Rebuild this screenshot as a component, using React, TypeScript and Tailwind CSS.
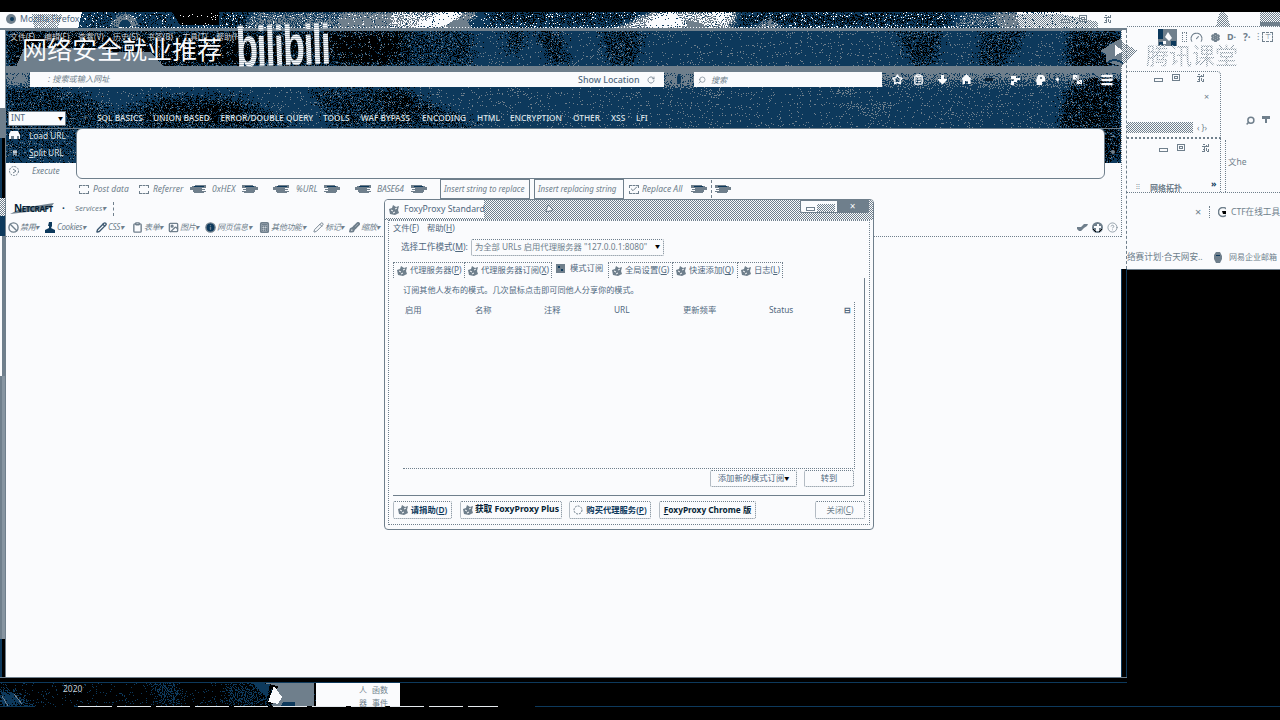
import React from "react";
import {
  Star, ClipboardList, ArrowDown, House, Menu, Search, RotateCw, Ban, User, Pencil, Clipboard,
  Image as ImageIcon, Info, Calculator, Ruler, Brush, Play, Check, Gauge, Settings, CircleHelp,
} from "lucide-react";

type P = { className?: string; children?: React.ReactNode };

const T = ({ className = "", children }: P) => (
  <span className={"block shrink-0 whitespace-nowrap " + className}>{children}</span>
);

const Grain = ({ id, color, blur }: { id: string; color: string; blur: number }) => (
  <filter id={id} x="0" y="0" width="1" height="1" colorInterpolationFilters="sRGB">
    <feGaussianBlur in="SourceAlpha" stdDeviation={blur} result="soft" />
    <feTurbulence type="fractalNoise" baseFrequency="0.9" numOctaves={2} seed={7} result="noise" />
    <feComposite in="soft" in2="noise" operator="arithmetic" k1={0} k2={1} k3={2.5} k4={-1.25} />
    <feComponentTransfer result="cut"><feFuncA type="discrete" tableValues="0 1" /></feComponentTransfer>
    <feFlood floodColor={color} />
    <feComposite in2="cut" operator="in" />
  </filter>
);

const Patterns = () => (
  <svg className="absolute h-0 w-0" aria-hidden="true">
    <defs>
      <Grain id="grainK" color="#000" blur={5} />
      <Grain id="grainG" color="#6f7f8c" blur={2} />
      <Grain id="grainW" color="#fafbfd" blur={1.5} />
      <Grain id="grainB" color="#0d395c" blur={3} />
      <pattern id="g50" width="2" height="2" patternUnits="userSpaceOnUse">
        <path d="M0 0h1v1h-1zM1 1h1v1h-1z" fill="#6f7f8c" />
      </pattern>
      <pattern id="g12" width="6" height="6" patternUnits="userSpaceOnUse">
        <path d="M0 0h1v1h-1zM3 4h1v1h-1z" fill="#6f7f8c" />
      </pattern>
      <pattern id="w50" width="2" height="2" patternUnits="userSpaceOnUse">
        <path d="M0 0h1v1h-1zM1 1h1v1h-1z" fill="#fafbfd" />
      </pattern>
    </defs>
  </svg>
);

const TitleArt = () => (
  <svg className="absolute inset-0" width="1127" height="18" shapeRendering="crispEdges">
    <rect width="1127" height="18" fill="#0d395c" />
    <g filter="url(#grainK)">
      <path d="M0 0H1127V18H0z" fillOpacity="0" />
      <path d="M82 0H172V16H82z" fillOpacity=".3" />
      <path d="M219 0H250V16H219zM485 0H640V12H490zM740 0H952V14H740z" fillOpacity=".55" />
    </g>
    <path d="M172 0H219V13H180z" fill="#000" />
    <g filter="url(#grainG)">
      <path d="M0 0H1127V18H0z" fillOpacity="0" />
      <path d="M250 0H345L340 16H245zM950 16L965 1H1000V14z" fillOpacity=".55" />
      <path d="M112 16q0-14 13-14t13 14zM345 0H480L460 18H335zM612 18L650 0H740L730 18zM750 16l20-9 12 9zM996 0H1127V18H1000z" />
    </g>
    <path d="M119 15q0-7 6-7t6 7z" fill="#0d395c" />
    <path d="M0 0H82L78 16H0z" fill="#fafbfd" />
    <path d="M32 2H62L58 16H34z" fill="url(#g50)" />
    <g filter="url(#grainW)">
      <path d="M0 0H1127V18H0z" fillOpacity="0" />
      <path d="M392 0H462L440 16H390zM622 16L655 0H735L728 16z" fillOpacity=".5" />
      <path d="M413 15L437 2L445 0H464L445 15zM645 16L658 1H677L684 15zM708 0H731L722 10zM1016 0H1127V18H1020z" />
    </g>
    <path d="M446 14L458 8H466L472 16H450zM686 8l16 3 4 5h-18z" fill="#6f7f8c" />
    <path d="M1062 0H1127V16H1098z" fill="#fafbfd" />
    <path d="M1016 2H1062L1098 10V16H1018z" fill="url(#g50)" />
    <path d="M0 16H1127V18H0z" fill="#6f7f8c" />
    <path d="M120 15.500H1120" stroke="#fafbfd" strokeDasharray="1 2" />
  </svg>
);

const HeaderArt = () => (
  <svg className="absolute inset-0" width="1115" height="133" shapeRendering="crispEdges">
    <rect width="1115" height="133" fill="#0d395c" />
    <g filter="url(#grainK)">
      <path d="M0 0H1115V133H0z" fillOpacity="0" />
      <path d="M0 0H400V37H0z" fillOpacity=".7" />
      <path d="M400 0H468V37H400z" fillOpacity=".45" />
      <path d="M0 0H100V14H0zM155 12H245L225 37H160zM320 0H400L380 37H340z" fillOpacity=".7" />
      <path d="M0 56L45 56 90 70 130 98 0 98zM80 98L150 66H230L300 98zM300 58H400L475 98H330z" fillOpacity=".5" />
      <path d="M370 60H410L400 98H390zM150 72H230L250 98H130z" fillOpacity=".4" />
      <path d="M0 98H72V132H0z" fillOpacity=".3" />
      <path d="M498 0h22l-2 22h-16zM528 0h28l8 37h-20zM592 0h46l-8 37h-26zM888 0h50l-10 37h-20zM975 0h46l-20 37h-30z" fillOpacity=".5" />
      <path d="M1062 0H1115V133H1090L1052 96L1060 60z" fillOpacity=".65" />
    </g>
    <path d="M10 37L18 18H95L108 22H145L158 37z" fill="#6f7f8c" />
    <path d="M0 36H1115V43H0z" fill="#6f7f8c" />
    <g filter="url(#grainG)">
      <path d="M0 0H1115V133H0z" fillOpacity="0" />
      <path d="M0 40H24V56H0zM658 40H690V58H658zM876 40H1115V49H876z" fillOpacity=".8" />
      <path d="M876 48H1080V58H876z" fillOpacity=".35" />
      <path d="M500 57h20l-10 12zM690 57h26v17zM810 57h40l-5 12zM832 74h60l-20 12z" fillOpacity=".3" />
    </g>
    <path d="M834 74l36 6 18-8M862 98l16-20 22-8M1014 94l20-12M522 92l40-6" stroke="#6f7f8c" strokeDasharray="1 3" fill="none" />
    <path d="M0 98.500H1115M0 .5H1115" stroke="#6f7f8c" />
  </svg>
);

const ic = "h-[11px] w-[11px] shrink-0";

const BoxMark = ({ on }: { on?: boolean }) => (
  <span className="flex h-[9px] w-[10px] shrink-0 items-center justify-center border border-dashed border-[#6f7f8c]">
    {on && <Check className="h-2 w-2" strokeWidth={3} />}
  </span>
);

const Arrow = ({ flip }: { flip?: boolean }) => (
  <svg width="16" height="10" viewBox="0 0 16 10" className={flip ? "shrink-0 -scale-x-100" : "shrink-0"} shapeRendering="crispEdges">
    <path d="M0 1H11V2H14V3H16V6H13V8H12V9H2V8H0V7H4V6H1V5H4V4H0z" fill="#6f7f8c" />
    <path d="M2 2H12V3H3z" fill="#0d395c" />
  </svg>
);

const Caption = ({ className = "" }: P) => (
  <svg width="56" height="10" className={"shrink-0 " + className} fill="none" stroke="#6f7f8c" shapeRendering="crispEdges">
    <path d="M1.500 5.500h8v3h-8zM19.500 1.500h7v6h-7zM21.500 3.500h3v2h-3z" />
    <path d="M44.500 1.500h2v2h2v-2h2v2h-2v3h2v2h-2v-2h-2v2h-2v-2h2v-3h-2z" strokeDasharray="2 1" />
  </svg>
);

const Tool = ({ className, icon, children }: P & { icon: React.ReactNode }) => (
  <div className={"flex shrink-0 items-center gap-[1px] " + className}>
    {icon}
    <T className="text-[8px] italic tracking-[-0.300px]">{children}▾</T>
  </div>
);

const Browser = () => (
  <section className="absolute left-0 top-[12px] flex h-[671px] w-[1127px] flex-col">
    <div className="relative h-[18px] shrink-0 overflow-hidden">
      <TitleArt />
      <div className="relative flex h-[13px] items-center pl-[6px]">
        <svg width="10" height="10"><circle cx="5" cy="5" r="5" fill="#6f7f8c" /><circle cx="6" cy="5" r="2" fill="#0d395c" /></svg>
        <T className="ml-[4px] w-[1040px] text-[8.800px] leading-[12px] text-[#50687d]">Mozilla Firefox</T>
        <Caption />
      </div>
    </div>
    <div className="flex min-h-0 grow">
      <div className="flex w-[6px] shrink-0 flex-col border-r border-[#6f7f8c]">
        <div className="h-[78px] bg-[#fafbfd]" />
        <div className="h-[30px] bg-[#6f7f8c]" />
        <div className="h-[60px] border-l-2 border-[#0d395c] bg-black" />
        <div className="h-[18px] bg-[repeating-conic-gradient(#6f7f8c_0_25%,#fafbfd_0_50%)] bg-[length:2px_2px]" />
        <div className="h-[20px] bg-[#0d395c]" />
        <div className="h-[140px] border-l-2 border-[#fafbfd] bg-[#6f7f8c]" />
        <div className="h-[263px] border-l-2 border-[#6f7f8c] bg-[#8795a1]" />
        <div className="grow border-l-2 border-[#0d395c] bg-black" />
      </div>
      <main className="flex w-[1115px] shrink-0 flex-col bg-[#fafbfd]">
        <div className="relative h-[133px] shrink-0">
          <HeaderArt />
          <div className="relative flex h-[133px] flex-col text-[#fafbfd]">
            <div className="flex h-[14px] shrink-0 pl-[4px] text-[8px] leading-[13px] text-[#c5ced6]">
              <T className="w-[34px]">文件(F)</T><T className="w-[34px]">编辑(E)</T><T className="w-[35px]">查看(V)</T>
              <T className="w-[34px]">历史(S)</T><T className="w-[35px]">书签(B)</T><T className="w-[34px]">工具(T)</T><T>帮助(H)</T>
            </div>
            <div className="h-[28px] shrink-0" />
            <div className="flex h-[15px] shrink-0 items-center pl-[14px]">
              <span className="h-[7px] w-[10px] -translate-x-[5px] rounded-full bg-[#6f7f8c]" />
              <div className="flex h-[15px] w-[634px] items-center bg-[#fafbfd] text-[#6f7f8c]">
                <T className="w-[542px] pl-[18px] text-[8.200px] italic">: 搜索或输入网址</T>
                <T className="w-[70px] pl-[6px] text-[8.900px] font-medium text-[#50687d]">Show Location</T>
                <RotateCw className="ml-[5px] h-2 w-2" strokeDasharray="3 1" />
              </div>
              <div className="flex w-[30px] justify-center"><span className="h-[9px] w-[4px] rounded-full bg-[#0d395c]" /></div>
              <div className="flex h-[15px] w-[188px] items-center gap-[5px] bg-[#fafbfd] pl-[4px] text-[8px] italic text-[#6f7f8c]">
                <Search className="h-2 w-2 -scale-x-100" />搜索
              </div>
              <div className="ml-[10px] flex items-center">
                <Star className={ic + " mr-[10px]"} strokeWidth={3} />
                <ClipboardList className={ic + " mr-[13px]"} strokeWidth={3} />
                <svg width="11" height="11" className="mr-[13px]" fill="#fafbfd"><path d="M4 1h3v4h3v1L5.500 10.500 1 6V5h3z" /></svg>
                <svg width="11" height="11" className="mr-[13px]" fill="#fafbfd"><path d="M5.500 0L11 5.500H9.500V10H7V7H4v3H1.500V5.500H0z" /></svg>
                <span className="mr-[17px] h-[3px] w-[8px] bg-[#0a2033]" />
                <svg width="11" height="11" className="mr-[14px]" fill="#fafbfd"><path d="M1 2h5v2h4v2H7v2H4v3H1V7h3V5H1z" /></svg>
                <svg width="11" height="11" className="mr-[10px]"><path d="M3 1h5l2 2v4L7 8v3H2L1 6z" fill="#fafbfd" /><path d="M5 3h2v2H5z" fill="#6f7f8c" /></svg>
                <span className="mr-[14px] h-[3px] w-[3px] rotate-45 bg-[#fafbfd]" />
                <svg width="10" height="10" className="mr-[17px]"><path d="M0 0h6v5H0zM4 5h5v4H4z" fill="#fafbfd" /><path d="M2 2l6 6M5 0v5H0" stroke="#6f7f8c" fill="none" /></svg>
                <Menu className="h-[14px] w-[14px]" strokeWidth={4} />
              </div>
            </div>
            <div className="flex h-[41px] shrink-0 items-end pl-[2px]">
              <div className="mb-[2px] flex h-[15px] w-[58px] items-center justify-between border border-[#6f7f8c] bg-[#fafbfd] px-[2px] text-[8.500px] text-[#50687d]">INT<span className="text-[5px] text-black">▼</span></div>
              <div className="mb-[3px] ml-[5px] flex h-[14px] items-center text-[8.300px] font-medium leading-[14px] text-[#dfe5e9]">
                <T className="w-[12px] text-[#6f7f8c]">−</T><T className="w-[14px] text-[#6f7f8c]">+</T>
                <T className="w-[56px]">SQL BASICS</T><T className="w-[67.500px]">UNION BASED</T><T className="w-[102.500px]">ERROR/DOUBLE QUERY</T>
                <T className="w-[38px]">TOOLS</T><T className="w-[61px]">WAF BYPASS</T><T className="w-[55px]">ENCODING</T><T className="w-[33px]">HTML</T>
                <T className="w-[63px]">ENCRYPTION</T><T className="w-[38px]">OTHER</T><T className="w-[25px]">XSS</T><T>LFI</T>
              </div>
            </div>
            <div className="flex h-[35px] shrink-0 items-start">
              <div className="-mt-[2px] w-[70px] text-[8.300px] leading-[17px] text-[#dfe5e9]">
                <div className="flex h-[18px] items-center pl-[3px]"><svg width="11" height="9"><path d="M2 0h7l2 4v4H0V3z" fill="#fafbfd" /><path d="M2 5h3v3H2zM8 5h2v3H8z" fill="#6f7f8c" /></svg><T className="ml-[9px]">Load URL</T></div>
                <div className="flex h-[17px] items-center pl-[3px]"><svg width="11" height="10"><path d="M1 0v7" stroke="#6f7f8c" strokeDasharray="1 1" /><path d="M5 2v5M7 2v5M4 4h4" stroke="#fafbfd" /></svg><T className="ml-[9px]"><u>S</u>plit URL</T></div>
                <div className="flex h-[18px] items-center pl-[3px] pt-[1px] text-[#6f7f8c]"><svg width="10" height="10" fill="none" stroke="#6f7f8c"><circle cx="5" cy="5" r="4.500" strokeDasharray="2 1" /><path d="M4 3l3 2-3 2" /></svg><T className="ml-[13px] italic">Execute</T></div>
              </div>
              <div className="h-[51px] w-[1029px] shrink-0 rounded-[6px] border border-[#6f7f8c] bg-[#fafbfd]" />
              <div className="flex w-[16px] flex-col items-center gap-[13px] pt-[8px]"><span className="h-px w-[4px] bg-[#6f7f8c]" /><span className="h-[4px] w-[4px] rounded-full bg-[#6f7f8c]" /></div>
            </div>
          </div>
        </div>
        <div className="flex h-[36px] shrink-0 items-end text-[8.500px] italic leading-[12px] text-[#6f7f8c]">
          <div className="flex h-[20px] items-center pl-[73px]">
            <BoxMark /><T className="ml-[4px] w-[46px]">Post data</T>
            <BoxMark /><T className="ml-[4px] w-[37px]">Referrer</T>
            <Arrow flip /><T className="ml-[6px] w-[30px]">0xHEX</T><Arrow /><span className="w-[15px]" />
            <Arrow flip /><T className="ml-[7px] w-[28px]">%URL</T><Arrow /><span className="w-[15px]" />
            <Arrow flip /><T className="ml-[6px] w-[34px] tracking-[-0.200px]">BASE64</T><Arrow />
            <div className="ml-[13px] h-[20px] w-[90px] overflow-hidden border border-[#6f7f8c] px-[3px] pt-[3px] text-[8px]"><T>Insert string to replace</T></div>
            <div className="ml-[4px] mr-[5px] h-[20px] w-[90px] overflow-hidden border border-[#6f7f8c] px-[3px] pt-[3px] text-[8px]"><T>Insert replacing string</T></div>
            <BoxMark on /><T className="ml-[3px] w-[49px]">Replace All</T><Arrow /><span className="ml-[4px] mr-[3px] h-[18px] border-l border-dashed border-[#6f7f8c]" /><Arrow />
          </div>
        </div>
        <div className="flex h-[19px] shrink-0 items-center pl-[4px]">
          <div className="relative flex h-[12px] w-[50px] items-center">
            <svg className="absolute inset-0" width="50" height="12"><path d="M0 11L12 5l32-5-3 4-6 3z" fill="#6f7f8c" /></svg>
            <T className="relative pl-[4px] text-[8px] font-bold leading-[9px] tracking-[-0.400px] text-[#061f35]"><span className="text-[10px]">N</span>ETCRAFT</T>
          </div>
          <T className="ml-[2px] w-[13px] text-[10px] font-bold text-[#0d395c]">·</T>
          <T className="w-[38px] text-[7.800px] italic text-[#6f7f8c]">Services▾</T>
          <span className="h-[14px] border-l border-dashed border-[#6f7f8c]" />
        </div>
        <div className="flex h-[19px] shrink-0 items-center border-b border-dotted border-[#6f7f8c] pl-[2px] text-[#6f7f8c]">
          <Tool className="w-[37px]" icon={<Ban className={ic} strokeWidth={3} />}>禁用</Tool>
          <Tool className="w-[51px]" icon={<svg className={ic} viewBox="0 0 11 11" fill="#0d395c"><path d="M4 0h3v4l-1 2 4 2v3H0V8l4-2V4H3z" /></svg>}>Cookies</Tool>
          <Tool className="w-[36px]" icon={<Pencil className={ic} strokeWidth={3} color="#3f5a72" />}>CSS</Tool>
          <Tool className="w-[36px]" icon={<Clipboard className={ic} strokeWidth={3} />}>表单</Tool>
          <Tool className="w-[37px]" icon={<ImageIcon className={ic} strokeWidth={3} />}>图片</Tool>
          <Tool className="w-[54px]" icon={<Info className={ic} strokeWidth={3} fill="#0d395c" />}>网页信息</Tool>
          <Tool className="w-[54px]" icon={<Calculator className={ic} strokeWidth={4} />}>其他功能</Tool>
          <Tool className="w-[36px]" icon={<Pencil className={ic} strokeWidth={2} />}>标记</Tool>
          <Tool className="w-[36px]" icon={<Brush className={ic} strokeWidth={4} />}>缩放</Tool>
          <div className="ml-auto flex items-center gap-[4px] pr-[3px]">
            <svg width="11" height="11" fill="#6f7f8c"><path d="M0 5h4l3-3h4l-1 2-3 2-3 3H2L0 7z" /></svg><svg width="11" height="11"><circle cx="5.500" cy="5.500" r="5.500" fill="#6f7f8c" /><path d="M5 2h2v2h2v2H7v3H4V6H2V4h3z" fill="#fafbfd" /><path d="M1 7l3 3M10 7l-3 3" stroke="#000" /></svg><CircleHelp className={ic} strokeWidth={1.500} />
          </div>
        </div>
      </main>
      <div className="flex w-[6px] shrink-0 flex-col">
        <div className="h-[239px] shrink-0 border-r border-dashed border-[#6f7f8c] bg-[#fafbfd]"><div className="h-[207px] border-l border-dotted border-[#6f7f8c]" /></div>
        <div className="grow border-x border-[#0d395c] bg-black" />
      </div>
    </div>
    <div className="h-[6px] shrink-0 border-b border-t border-b-[#0d395c] border-t-[#6f7f8c] bg-black" />
  </section>
);

const SideWindows = () => (
  <section className="absolute left-[1127px] top-[12px] flex h-[258px] w-[153px] flex-col overflow-hidden border-b border-[#6f7f8c] bg-[#fafbfd] text-[9px] text-[#6f7f8c]">
    <div className="flex h-[15px] shrink-0 items-end justify-end border-b border-dotted border-[#6f7f8c]">
      <svg width="16" height="14" className="mr-[29px]" shapeRendering="crispEdges"><path d="M4 2q4-4 8 0l3 12H1z" fill="url(#g50)" /></svg>
      <svg width="20" height="15" shapeRendering="crispEdges"><path d="M0 0h20v11H0z" fill="url(#g50)" /><path d="M0 11h20v4H0z" fill="#6f7f8c" /></svg>
    </div>
    <div className="flex h-[20px] shrink-0 items-center pl-[31px]">
      <svg width="20" height="19" className="mr-[4px]"><path d="M0 1h19v17H0z" fill="#6f7f8c" /><path d="M0 1h5v10H0zM13 13h5v5h-5zM1 14h4v3H1z" fill="#0d395c" /><path d="M7 9l3-5 4 6-3 3zM5 13h3v3H5z" fill="#fafbfd" /></svg>
      <span className="mr-[3px] h-[10px] w-[5px] border border-dotted border-[#6f7f8c]" />
      <Gauge className="mr-[8px] h-[13px] w-[13px]" strokeWidth={2} strokeDasharray="2 1" />
      <Settings className="mr-[7px] h-[9px] w-[9px]" strokeWidth={5} />
      <T className="w-[16px] font-bold">D·</T><T className="w-[14px] text-[10px] font-bold">?·</T><T className="w-[5px]">⁝</T>
      <span className="h-[10px] w-[11px] border border-dashed border-[#6f7f8c] text-center text-[7px] leading-[8px]">⊤</span>
    </div>
    <div className="h-[24px] shrink-0" />
    <div className="flex h-[122px] shrink-0 border-b border-dotted border-[#6f7f8c]">
      <div className="w-[94px] shrink-0">
        <div className="flex h-[68px] flex-col rounded-tr-[4px] border-b-2 border-r border-t border-dotted border-[#6f7f8c]">
          <Caption className="ml-[26px] mt-[1px]" />
          <T className="ml-[77px] mt-[8px] text-[9px] leading-[12px]">×</T>
          <div className="mt-auto flex h-[15px] items-start"><span className="h-[11px] w-[66px] bg-[repeating-conic-gradient(#6f7f8c_0_25%,#fafbfd_0_50%)] bg-[length:2px_2px]" /><T className="ml-[4px] text-[8px] leading-[11px]">{"‹ }›"}</T></div>
        </div>
        <div className="flex h-[53px] flex-col border-r border-dotted border-[#6f7f8c]">
          <Caption className="ml-[31px] mt-[4px]" />
          <div className="mt-auto flex items-end"><T className="w-[14px] pl-[9px] text-[7px]">⁝⁝</T><T className="ml-[9px] w-[61px] text-[8px] font-bold leading-[8px]">网络拓扑</T><T className="pb-[3px] text-[9px] font-bold leading-[10px] text-[#0d395c]">»</T></div>
        </div>
      </div>
      <div className="flex w-[5px] shrink-0 items-end"><span className="h-[52px] w-full border-r border-dotted border-[#6f7f8c]" /></div>
      <div className="flex flex-col">
        <div className="mt-[45px] flex h-[12px] gap-[7px] pl-[20px]"><Search className="h-[9px] w-[9px] -scale-x-100" strokeWidth={4} /><svg width="9" height="8"><path d="M0 0h8v3H5v4H3V3H0z" fill="#6f7f8c" /></svg></div>
        <T className="mt-[28px] pl-[2px] text-[8.500px]">文he</T>
      </div>
    </div>
    <div className="flex h-[38px] shrink-0 items-center pl-[68px]">
      <T className="w-[14px] text-[11px]">×</T><span className="mr-[8px] h-[12px] border-l border-dotted border-[#6f7f8c]" />
      <svg width="11" height="11" className="mr-[5px]"><circle cx="5" cy="5" r="4.500" fill="none" stroke="#6f7f8c" strokeWidth="1.500" /><path d="M4 4h4v3H5z" fill="#000" /></svg>
      <T className="text-[8.600px]">CTF在线工具</T>
    </div>
    <div className="flex h-[51px] items-end pb-[6px]">
      <T className="w-[86px] text-[8.600px] leading-[12px]">络赛计划·合天网安..</T>
      <svg width="10" height="11" className="mr-[6px]"><path d="M3 0h4l2 4v3l-2 4H3L1 7V3z" fill="#6f7f8c" /><path d="M3 3h4v1H3z" fill="#0d395c" /></svg>
      <T className="text-[8px] leading-[12px]">网易企业邮箱</T>
    </div>
  </section>
);

const Btn = ({ className = "", children }: P) => (
  <button className={"flex shrink-0 items-center justify-center rounded-[2px] border border-dotted border-[#6f7f8c] whitespace-nowrap " + className}>{children}</button>
);

const Fox = ({ className = "" }: P) => (
  <svg width="10" height="10" className={"shrink-0 " + className}><path d="M0 4l3-1 1-3 3 2 3-1-1 4 1 3-4 2-5-1z" fill="#6f7f8c" /><path d="M2 5l2 1M6 4l2-1M4 8l2-1" stroke="#fafbfd" /></svg>
);

const Tab = ({ className = "", children }: P) => (
  <div className={"flex h-[16px] shrink-0 items-center gap-[3px] border-r border-t border-dotted border-[#6f7f8c] " + className}><Fox /><T>{children}</T></div>
);

const Dialog = () => (
  <section className="absolute left-[384px] top-[199px] flex h-[331px] w-[490px] flex-col overflow-hidden rounded-[4px] border border-[#6f7f8c] bg-[#fafbfd] text-[8.300px] text-[#50687d]">
    <div className="flex h-[20px] shrink-0 items-start bg-[repeating-conic-gradient(#6f7f8c_0_25%,#fafbfd_0_50%)] bg-[length:2px_2px]">
      <div className="flex h-[18px] w-[99px] items-center bg-[#fafbfd] pl-[4px] pt-[2px]"><Fox /><T className="ml-[5px] text-[8.700px]">FoxyProxy Standard</T></div>
      <div className="ml-auto mr-[4px] flex h-[13px] w-[69px] rounded-b-[2px] border border-[#6f7f8c] bg-[#fafbfd]">
        <span className="ml-[5px] mt-[6px] h-[4px] w-[9px] border border-[#6f7f8c]" /><span className="ml-[2px] mt-[3px] h-[8px] w-[18px] bg-[repeating-conic-gradient(#6f7f8c_0_25%,#fafbfd_0_50%)] bg-[length:2px_2px]" />
        <span className="ml-auto flex w-[31px] items-center justify-center bg-[#6f7f8c] text-[10px] text-[#fafbfd]">×</span>
      </div>
    </div>
    <div className="mx-[3px] mb-[4px] flex grow flex-col border border-dotted border-[#6f7f8c]">
      <div className="flex h-[14px] shrink-0 items-center pl-[4px]"><T className="w-[34px]">文件(<u>F</u>)</T><T>帮助(<u>H</u>)</T></div>
      <div className="flex h-[24px] shrink-0 items-center pl-[12px]">
        <T className="w-[70px] text-[8.600px]">选择工作模式(<u>M</u>):</T>
        <div className="flex h-[17px] w-[193px] items-center justify-between rounded-[2px] border border-dotted border-[#6f7f8c] px-[3px] text-[#6f7f8c]"><T>为全部 URLs 启用代理服务器 "127.0.0.1:8080"</T><span className="text-[5px] text-black">▼</span></div>
      </div>
      <div className="flex h-[19px] shrink-0 items-end pl-[4px]">
        <Tab className="w-[72px] border-l pl-[3px]">代理服务器(<u>P</u>)</Tab><Tab className="w-[87px] pl-[3px]">代理服务器订阅(<u>X</u>)</Tab>
        <div className="flex h-[20px] w-[56px] items-center gap-[5px] pl-[4px]"><svg width="9" height="9"><path d="M0 0h9v9H0z" fill="#6f7f8c" /><path d="M2 2h2v2H2zM5 5h2v2H5z" fill="#0d395c" /></svg>模式订阅</div>
        <Tab className="w-[65px] border-l pl-[3px]">全局设置(<u>G</u>)</Tab><Tab className="w-[65px] pl-[3px]">快速添加(<u>Q</u>)</Tab><Tab className="w-[45px] pl-[3px]">日志(<u>L</u>)</Tab>
      </div>
      <div className="mx-[4px] flex h-[218px] shrink-0 flex-col border-b border-r border-[#6f7f8c] pl-[10px]">
        <T className="mt-[5px] h-[14px] text-[8.150px] leading-[13px]">订阅其他人发布的模式。几次鼠标点击即可同他人分享你的模式。</T>
        <div className="mt-[5px] h-[167px] w-[452px] border-b border-r border-dotted border-[#6f7f8c]">
          <div className="flex h-[17px] items-center pl-[2px]"><T className="w-[70px]">启用</T><T className="w-[69px]">名称</T><T className="w-[70px]">注释</T><T className="w-[69px]">URL</T><T className="w-[86px]">更新频率</T><T className="w-[75px]">Status</T><T className="font-bold">⊟</T></div>
        </div>
        <div className="flex h-[19px] items-center gap-[7px] pl-[307px]"><Btn className="h-[17px] w-[87px] justify-between px-[3px]">添加新的模式订阅<span className="text-[5px] text-black">▼</span></Btn><Btn className="h-[17px] w-[50px]">转到</Btn></div>
      </div>
      <div className="flex grow items-center pl-[4px] text-[8.300px] font-semibold text-[#0d395c]">
        <Btn className="mr-[8px] h-[18px] w-[59px] gap-[3px]"><Fox /><T>请捐助(<u>D</u>)</T></Btn>
        <Btn className="mr-[7px] h-[18px] w-[102px] gap-[2px]"><Fox /><span className="text-[8.700px] font-bold text-[#061f35]">获取 FoxyProxy Plus</span></Btn>
        <Btn className="mr-[8px] h-[18px] w-[82px] gap-[3px]"><svg width="10" height="10"><circle cx="5" cy="5" r="4" fill="none" stroke="#6f7f8c" strokeDasharray="2 1" /></svg><T>购买代理服务(<u>P</u>)</T></Btn>
        <Btn className="h-[18px] w-[97px] text-[8.300px] font-bold text-[#061f35]"><T><u>F</u>oxyProxy Chrome 版</T></Btn>
        <Btn className="ml-[59px] h-[18px] w-[50px] font-normal text-[#6f7f8c]">关闭(<u>C</u>)</Btn>
      </div>
    </div>
  </section>
);

const Desktop = () => (
  <section className="absolute left-0 top-[678px] h-[42px] w-[1280px]">
    <svg className="absolute inset-0" width="1280" height="42" shapeRendering="crispEdges">
      <g filter="url(#grainB)">
        <path d="M0 0H400V29H0z" fillOpacity="0" />
        <path d="M0 10l12 4 22 15H0z" />
        <path d="M145 4l30-2 8 12-6 14h-12zM225 4l40 4 10 20h-50z" fillOpacity=".45" />
      </g>
      <path d="M2 18l6 10M14 16l8 10" stroke="#6f7f8c" />
      <path d="M248 2h66v26h-42l6-20z" fill="#6f7f8c" />
      <path d="M252 4l18 2-3 14zM266 18l-10-8M283 24h12v4h-14z" fill="#0d395c" />
      <path d="M268 24l6-16 8 11-4 7z" fill="#fafbfd" />
      <path d="M0 28.500H34M74 28.500H110M535 28.500H1280" stroke="#0d395c" />
      <path d="M78 28.500H498" stroke="#e5eaee" strokeDasharray="34 5" />
      <path d="M0 29H1280V42H0z" fill="#000" />
    </svg>
    <div className="relative flex h-[28px] items-center text-[8.500px]">
      <T className="w-[316px] pb-[6px] pl-[63px] text-[#c5ced6]">2020</T>
      <div className="flex h-[28px] w-[84px] flex-col bg-[#fafbfd] pl-[43px] pt-[5px] text-[8px] leading-[13px] text-[#6f7f8c]">
        <div className="flex"><T className="w-[13px]">人</T><T>函数</T></div>
        <div className="flex"><T className="w-[13px]">器</T><T>事件</T></div>
      </div>
    </div>
  </section>
);

const Watermarks = () => (
  <div className="pointer-events-none absolute left-0 top-0 h-[70px] w-[1280px]">
    <T className="absolute left-[22px] top-[31px] text-[25px] leading-[36px] text-[#fafbfd]">网络安全就业推荐</T>
    <T className="absolute left-[236px] top-[19px] origin-left scale-x-[0.630] rotate-[-2deg] bg-[repeating-linear-gradient(#fafbfd_0_1px,#aeb9c2_1px_2px)] bg-clip-text font-['Liberation_Sans'] text-[57px] font-bold leading-[56px] tracking-[-2px] text-transparent">bilibili</T>
    <svg className="absolute left-[1100px] top-[38px]" width="40" height="30" shapeRendering="crispEdges">
      <path d="M0 13L21 0V28L6 24V16z" fill="#6f7f8c" /><path d="M21 3L38 13 21 28z" fill="url(#g50)" /><path d="M15 7l8 6-8 5z" fill="#fafbfd" /><path d="M7 25q7-6 16 0" stroke="#0d395c" strokeWidth="2" fill="none" />
    </svg>
    <T className="absolute left-[1146px] top-[39px] bg-[repeating-conic-gradient(#8b99a4_0_25%,#fafbfd_0_50%)] bg-[length:2px_2px] bg-clip-text text-[23px] leading-[32px] text-transparent">腾讯课堂</T>
  </div>
);

export default function App() {
  return (
    <div className="relative h-[720px] w-[1280px] overflow-hidden bg-black font-['Noto_Sans','Noto_Sans_CJK_SC',sans-serif]">
      <Patterns />
      <SideWindows />
      <Desktop />
      <Browser />
      <Watermarks />
      <Dialog />
      <Play className="absolute left-[545px] top-[203px] h-[12px] w-[9px] rotate-[20deg]" fill="#fafbfd" color="#6f7f8c" strokeWidth={3} />
    </div>
  );
}
